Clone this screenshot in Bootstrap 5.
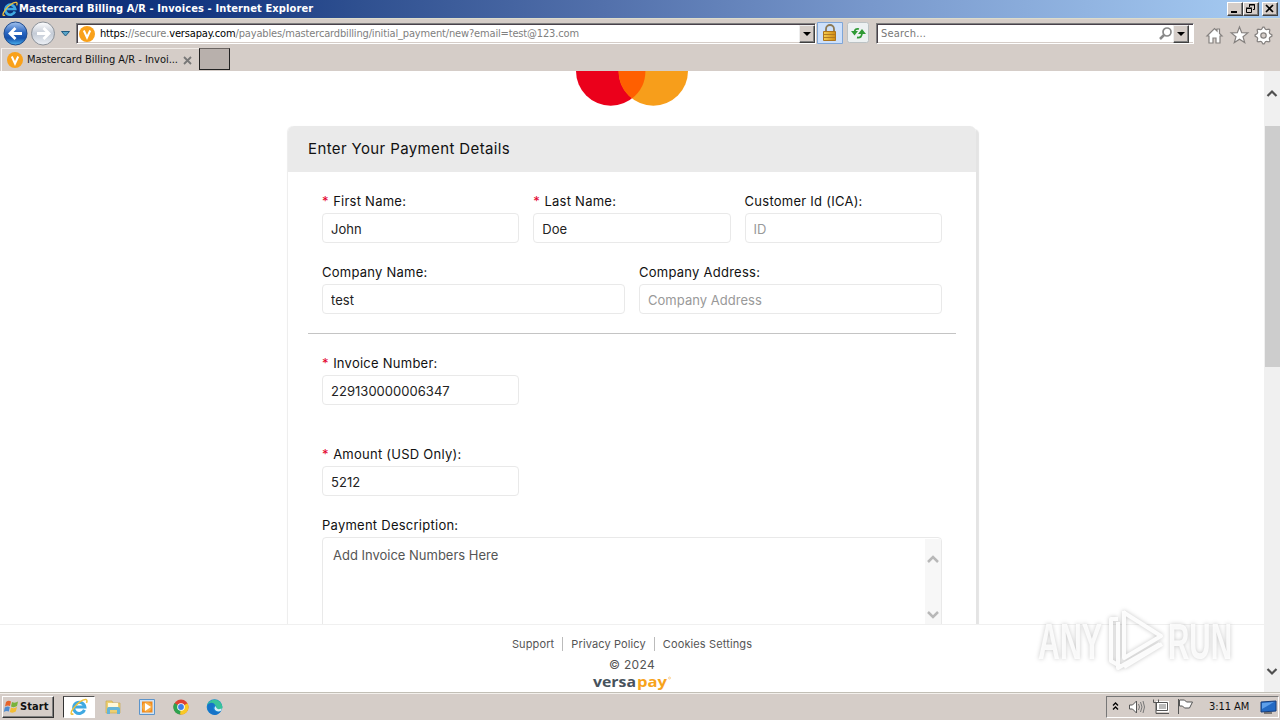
<!DOCTYPE html>
<html lang="en">
<head>
<meta charset="utf-8">
<title>Mastercard Billing A/R - Invoices</title>
<link href="https://cdn.jsdelivr.net/npm/bootstrap@5.3.0/dist/css/bootstrap.min.css" rel="stylesheet">
<style>
:root{--face:#d5cdc8;--ui:"DejaVu Sans Condensed","DejaVu Sans",sans-serif}
body{width:1280px;height:720px;overflow:hidden;font-family:Inter,sans-serif;font-size:13px;color:#111;background:#fff}
svg{display:block;flex:none;overflow:visible}
.ui{font-family:var(--ui);font-stretch:condensed;font-size:11px;line-height:14px;white-space:nowrap}
.titlebar{height:18px;background:linear-gradient(90deg,#0c2c73 0,#123580 15%,#2f5090 28%,#5270ab 47%,#7898cc 68%,#a3c8f0 97%);color:#fff;padding:0 2px}
.titlebar .cap{font-weight:700;letter-spacing:.12px;margin-left:1px}
.winbtn{width:16px;height:14px;background:var(--face);border:1px solid;border-color:#fff #404040 #404040 #fff;box-shadow:inset -1px -1px #808080}
.toolbar{height:30px;background:var(--face);border-top:1px solid #dcdccb}
.sunk{height:21px;background:#fff;border:1px solid;border-color:#808080 #fff #fff #808080;box-shadow:inset 1px 1px #49414a,inset 0 -1px #d5cdc8}
.drop{width:16px;height:18px;background:var(--face);border:1px solid;border-color:#eee #404040 #404040 #eee;box-shadow:inset -1px -1px #808080}
.tabs{height:23px;background:var(--face)}
.tab1{width:198px;height:23px;border-left:1px solid #f8f6f4;border-top:1px solid #f1ece8}
.tab2{width:31px;height:22px;background:#b8b0ac;border:1px solid #555;border-color:#6b6562 #222 #222 #222}
.viewport{height:621px}
.content{width:1264px}
.scroller{height:553px;overflow:hidden}
.pay{width:688px;height:600px;margin-top:20px;border:0;border-radius:6px;box-shadow:4px 2px 1px -1px #e4e4e4,-1px 0 1px #ededed}
.pay .card-header{height:46px;background:#eaeaea;border:0;border-radius:6px 6px 0 0;padding:0 20px;font-size:15px;letter-spacing:.38px;line-height:46px}
.pay .card-body{padding:19px 20px 20px}
.grp{padding:0 14px;gap:14px}
.grp label{display:block;line-height:20px;height:22px;font-size:13px;letter-spacing:.25px}
.grp label b{color:#e3002b;font-weight:400;letter-spacing:.7px}
.grp .form-control{height:30px;min-height:0;padding:2px 8px 1px;font-size:13px;line-height:20px;letter-spacing:.03px;border:1px solid #e9e9e9;border-radius:4px;color:#222}
.grp .form-control::placeholder{color:#999;opacity:1}
.third{width:197.3px}
.rule{height:1px;background:#c4c4c4}
.area{height:120px;border:1px solid #e9e9e9;border-radius:4px;padding:7px 0 0 10px;color:#555;line-height:20px;letter-spacing:-.01px}
.areabar{width:16px;margin-top:-6px;background:#f7f7f7;padding:15px 0 0 2px}
.foot{height:68px;border-top:1px solid #f0f0f0;color:#555;font-size:11px}
.links{height:14px;margin-top:12px;line-height:14px;letter-spacing:.12px}
.links span+span{border-left:1px solid #bbb}
.vbar{width:16px;background:#f0f0f0}
.thumb{height:241px;background:#cdcdcd;margin-left:1px}
.taskbar{height:28px;background:var(--face);border-top:1px solid #c2bfb6;box-shadow:inset 0 1px #f3f0ec;padding-left:2px}
.start{width:52px;height:22px;border:1px solid;border-color:#fff #333 #333 #fff;box-shadow:inset -1px -1px #808080}
.pressed{width:32px;height:22px;background:#fff;border:1px solid;border-color:#555 #fff #fff #333}
.tray{width:173px;height:22px;border:1px solid;border-color:#777 #fff #fff #777}
.mark-run{left:1030px;top:604px}
</style>
</head>
<body>
<svg width="0" height="0" class="position-absolute">
<defs>
<symbol id="ie" viewBox="0 0 16 16"><path d="M12.9 10.6A5 5 0 1 1 13.2 8H4" fill="none" stroke="#3fa9e2" stroke-width="2.7"/><path d="M3 14C.5 15.5.2 13 2.8 9.6 6 5 11.5.6 14.4 1.400c1 .4.8 1.800.2 3" fill="none" stroke="#efc13a" stroke-width="1.3"/></symbol>
<symbol id="vp" viewBox="0 0 16 16"><circle cx="8" cy="8" r="8" fill="#f9a11b"/><path d="M4.800 4.500 8 11.500l3.200-7" fill="none" stroke="#fff" stroke-width="2"/></symbol>
<linearGradient id="bl" x2="0" y2="1"><stop stop-color="#a5c4ef"/><stop offset=".45" stop-color="#2a66c1"/><stop offset=".7" stop-color="#1450ac"/><stop offset="1" stop-color="#4bb4ee"/></linearGradient>
<linearGradient id="gy" x2="0" y2="1"><stop stop-color="#fff"/><stop offset=".5" stop-color="#c4cbd6"/><stop offset="1" stop-color="#edf1f6"/></linearGradient>
<linearGradient id="gold" x2="1"><stop stop-color="#f6cf50"/><stop offset="1" stop-color="#d08a13"/></linearGradient>
</defs>
</svg>

<header>
<div class="titlebar d-flex align-items-center ui">
<svg width="16" height="16"><use href="#ie"/></svg><span class="cap flex-grow-1">Mastercard Billing A/R - Invoices - Internet Explorer</span>
<span class="winbtn"><svg width="14" height="12"><path d="M3 9h6" stroke="#000" stroke-width="2"/></svg></span>
<span class="winbtn"><svg width="14" height="12" fill="none" stroke="#000"><path d="M5.500 4V1.500h5v5H9M5 2h6M2.500 5.500h5v4h-5zM2 5h6"/></svg></span>
<span class="winbtn" style="margin-left:3px"><svg width="14" height="12"><path d="m3 2 7 7m0-7-7 7" stroke="#000" stroke-width="1.700"/></svg></span>
</div>
<div class="toolbar d-flex align-items-start">
<svg width="76" height="29" viewBox="0 19 76 29"><circle cx="15.500" cy="33.500" r="11.500" fill="url(#bl)" stroke="#204b8c"/><path d="M22 33.500H10m5.500-5.500L10 33.500l5.500 5.500" fill="none" stroke="#fff" stroke-width="2.800"/><circle cx="43" cy="33.500" r="11.500" fill="url(#gy)" stroke="#8c9198"/><path d="M37 33.500h12m-5.500-5.500 5.500 5.500-5.500 5.500" fill="none" stroke="#fff" stroke-width="2.800"/><path d="M61.500 31.500h8L65.500 36z" fill="#59a5c9" stroke="#205c82"/></svg>
<div class="sunk mt-1 d-flex align-items-center ui" style="width:740px"><svg style="margin:0 5px 0 2px" width="16" height="16"><use href="#vp"/></svg><span class="flex-grow-1" style="color:#808080;letter-spacing:-.155px"><span class="text-black">https:</span>//secure.<span class="text-black">versapay.com</span>/payables/mastercardbilling/initial_payment/new?email=test@123.com</span><span class="drop"><svg width="14" height="16"><path d="M3 6h8l-4 4z"/></svg></span></div>
<svg width="54" height="24" viewBox="816 19 54 24"><path d="M817.500 22.500h25v21h-25z" fill="#cde0fb" stroke="#7fa6d8"/><path d="M826 32v-3a4 4 0 0 1 8 0v3" fill="none" stroke="#8c7955" stroke-width="1.800"/><path d="M823.500 31.500h12v9h-12z" fill="url(#gold)" stroke="#ad741d"/><path d="M824 34.500h11m-11 3h11" stroke="#b27a22"/><rect x="847.500" y="22.500" width="21" height="20" rx="2" fill="#edf1f2" stroke="#bcc2c4"/><path d="M859 29q-4-1-4.500 3M857 37.500q5 1 5-5" fill="none" stroke="#2f9a35" stroke-width="1.800"/><path d="M851 31h7l-3.500 4.500zM858 34h8l-4-5z" fill="#2f9a35"/></svg>
<div class="sunk mt-1 d-flex align-items-center ui" style="width:318px;margin-left:6px"><span class="flex-grow-1" style="color:#777;margin-left:4px;letter-spacing:.2px">Search...</span><svg width="15" height="16"><circle cx="9" cy="6" r="4" fill="none" stroke="#888" stroke-width="1.700"/><path d="m6 9-4 4" stroke="#888" stroke-width="2.500"/></svg><span class="drop me-1"><svg width="14" height="16"><path d="M3 6h8l-4 4z"/></svg></span></div>
<svg class="ms-2" width="76" height="28" viewBox="1202 19 76 28" fill="#fff" stroke="#85817f" stroke-width="1.200"><path d="m1207 36 7.500-7.500 2.500 2.500v-2h2.500v4.500l2.500 2.500h-2v7h-4v-5h-3v5h-4v-7z"/><path d="m1239.500 27 2.200 5.700 6.100.2-4.800 3.800 1.700 5.900-5.200-3.400-5.200 3.400 1.700-5.900-4.800-3.800 6.100-.2z"/><path d="M1271.930 34.890L1271.930 36.110L1269.780 37.450L1269.320 38.540L1269.900 41.010L1269.010 41.900L1266.540 41.320L1265.450 41.780L1264.110 43.930H1262.890L1261.550 41.780L1260.460 41.320L1257.990 41.900L1257.100 41.010L1257.680 38.540L1257.220 37.450L1255.070 36.110V34.890L1257.220 33.550L1257.680 32.460L1257.100 29.990L1257.990 29.100L1260.460 29.680L1261.550 29.220L1262.890 27.070H1264.110L1265.450 29.220L1266.540 29.680L1269.010 29.100L1269.900 29.990L1269.320 32.460L1269.780 33.550z"/><circle cx="1263.500" cy="35.500" r="2.700" fill="#d5cdc8"/></svg>
</div>
<div class="tabs d-flex ui">
<div class="tab1 d-flex align-items-center" style="margin-left:1px;padding-left:5px"><svg width="16" height="16"><use href="#vp"/></svg><span class="ms-1" style="letter-spacing:-.03px;width:156px">Mastercard Billing A/R - Invoi...</span><svg width="9" height="9"><path d="m1 1 7 7m0-7-7 7" stroke="#777" stroke-width="1.800"/></svg></div>
<div class="tab2"></div>
</div>
</header>

<main class="viewport d-flex">
<div class="content">
<div class="scroller">
<svg class="mx-auto overflow-hidden" width="112" height="35" viewBox="0 0 112 35"><circle cx="34.700" cy="0" r="34.700" fill="#eb001b"/><circle cx="77.300" cy="0" r="34.700" fill="#f79e1b"/><path d="M42.600 0A34.700 34.700 0 0 0 56 27.400 34.700 34.700 0 0 0 69.400 0z" fill="#ff5f00"/></svg>
<section class="card pay mx-auto">
<div class="card-header">Enter Your Payment Details</div>
<form class="card-body">
<div class="grp d-flex">
<div class="third"><label><b>*</b> First Name:</label><input class="form-control" value="John"></div>
<div class="third"><label><b>*</b> Last Name:</label><input class="form-control" value="Doe"></div>
<div class="third"><label>Customer Id (ICA):</label><input class="form-control" placeholder="ID"></div>
</div>
<div class="grp d-flex" style="margin-top:19px">
<div class="flex-fill"><label>Company Name:</label><input class="form-control" value="test"></div>
<div class="flex-fill"><label>Company Address:</label><input class="form-control" placeholder="Company Address"></div>
</div>
<div class="rule" style="margin-top:19px"></div>
<div class="grp" style="margin-top:19px"><div class="third"><label><b>*</b> Invoice Number:</label><input class="form-control" value="229130000006347"></div></div>
<div class="grp" style="margin-top:39px"><div class="third"><label><b>*</b> Amount (USD Only):</label><input class="form-control" value="5212"></div></div>
<div class="grp" style="margin-top:19px"><label>Payment Description:</label>
<div class="area d-flex justify-content-between"><span>Add Invoice Numbers Here</span><div class="areabar"><svg width="12" height="70" fill="none" stroke="#b8b8b8" stroke-width="2.500"><path d="m1 8 5-5 5 5M1 58l5 5 5-5"/></svg></div></div></div>
</form>
</section>
</div>
<footer class="foot bg-white">
<div class="links d-flex justify-content-center"><span class="pe-2">Support</span><span class="px-2">Privacy Policy</span><span class="ps-2">Cookies Settings</span></div>
<div class="text-center" style="font-size:12px;line-height:14px;margin-top:7px;letter-spacing:.3px">© 2024</div>
<svg class="mx-auto" width="80" height="20" viewBox="0 0 80 20" font-family="Open Sans,sans-serif" font-weight="700" font-size="15"><text x="1" y="15" textLength="43" lengthAdjust="spacingAndGlyphs" fill="#47525c">versa</text><text x="45" y="15" textLength="30" lengthAdjust="spacingAndGlyphs" fill="#f7a31c">pay</text><circle cx="77.500" cy="6" r="1" fill="none" stroke="#f7b95a" stroke-width=".6"/></svg>
</footer>
</div>
<div class="vbar"><svg width="16" height="55"><path d="m3.500 25 4.500-4.500 4.500 4.500" fill="none" stroke="#505050" stroke-width="2.200"/></svg><div class="thumb"></div><svg width="16" height="325"><path d="m3.500 302 4.500 4.500 4.500-4.500" fill="none" stroke="#505050" stroke-width="2.200"/></svg></div>
</main>

<div class="taskbar d-flex align-items-center ui">
<div class="start d-flex align-items-center fw-bold"><svg width="17" height="16" viewBox="0 0 17 16"><path d="M3 3q2.500-2 5-.5L7 7Q4.500 6 2 7.500z" fill="#e66429"/><path d="M9 3q3 1.500 6-.5L14 7q-3 2-6 .5z" fill="#78b33c"/><path d="M1.800 8.500q2.500-1.500 5-.5l-1 4.500q-2.500-1-5 .5z" fill="#4f8cd0"/><path d="M8 8.500q3 1.500 6-.5l-1.200 4.500q-3 2-6 .5z" fill="#f3bd35"/></svg><span style="letter-spacing:.1px">Start</span></div>
<div class="pressed d-flex justify-content-center align-items-center" style="margin-left:9px"><svg width="18" height="18"><use href="#ie"/></svg></div>
<svg width="132" height="24" viewBox="95 695 132 24"><path d="M106 701h6l1 2h7v10h-14z" fill="#edcf70" stroke="#c9ab50" stroke-width=".7"/><path d="M108 703h10v4h-10z" fill="#fff8d8"/><path d="M107 714v-5q0-2 2-2h9q2 0 2 2v5h-3v-4h-7v4z" fill="#64b4d7"/><path d="M139.500 699.500h15v15h-15z" fill="#cfe3f5" stroke="#5c94ca"/><path d="M142 701.500h10.500v11H142z" fill="#f28a1c"/><circle cx="147" cy="707" r="4.800" fill="#f8ad45"/><path d="m145 703 6 4-6 4z" fill="#fff"/><circle cx="181" cy="707" r="7.500" fill="#df4132"/><path d="M181 707v7.500A7.500 7.500 0 0 1 174.500 703z" fill="#2ea350"/><path d="M181 707l6.500-3.700A7.500 7.500 0 0 1 180 714.500z" fill="#f9c925"/><circle cx="181" cy="707" r="3.800" fill="#fff"/><circle cx="181" cy="707" r="2.900" fill="#3f7fe8"/><circle cx="214.500" cy="707" r="7.800" fill="#1788d2"/><path d="M207 705a8 8 0 0 1 15.500 2q0 3-4 3-3 0-2-3-2-5-9.500-2z" fill="#38c29a"/><path d="M208 704q5-3 7 1-4 3 0 6 3 2 6 0-5 7-11 2-4-4-2-9z" fill="#1673c8"/><path d="M215.500 706q-2.500 3 1 5 2 1 5-.5v-2q-4 1.500-5-.5z" fill="#d6edf8"/></svg>
<div class="tray ms-auto d-flex align-items-center" style="margin-right:1px"><svg width="96" height="20" viewBox="1107 697 96 20" fill="none" stroke="#555"><path d="m1113 705.500 2.500-2.500 2.500 2.500m-5 4 2.500-2.500 2.500 2.500" stroke="#000" stroke-width="1.300"/><path d="M1129.500 705h3l4-4v12l-4-4h-3z" fill="#fff"/><path d="M1138.500 704q2 3 0 6m2-8q3 5 0 10m2.500-11q3 6 0 12" stroke="#777"/><path d="M1157.500 702.500h10v8h-10z" fill="#bbb" stroke="#fff" stroke-width="3"/><path d="M1156.500 702.500h11v8h-11zM1158 713.500h11M1153.500 699.500v3h5v-3m-2.500 3v11h3"/><path d="M1178.500 699v15m1-14h5l2 2h6l-3 6h-5l-2-2h-3z" fill="#fff"/></svg><span style="letter-spacing:-.05px;margin-left:6px">3:11 AM</span><svg class="ms-auto" width="17" height="18" viewBox="1 0 17 18"><path d="m1 4 15-1v10l-15 1z" fill="#236ac4" stroke="#173d7a"/><path d="m2 5 12-1-12 7z" fill="#5d9fea"/><path d="M4 15h8" stroke="#222"/></svg></div>
</div>

<svg class="mark-run position-absolute" width="210" height="76" viewBox="1030 604 210 76" style="filter:drop-shadow(0 0 2px rgba(0,0,0,.25))" fill="#fff" fill-opacity=".85">
<g font-family="Liberation Sans Narrow,Liberation Sans,sans-serif" font-weight="700" font-size="50"><text x="1038" y="659" textLength="64" lengthAdjust="spacingAndGlyphs">ANY</text><text x="1168" y="659" textLength="64" lengthAdjust="spacingAndGlyphs">RUN</text></g>
<g fill="none" stroke="#fff" stroke-opacity=".9" stroke-width="4" stroke-linejoin="round"><path d="M1124 611v47l37-22-38-24M1118 619h-7v42l9 5M1124 667l38-23M1118 622v46l42-24"/></g>
</svg>
<script src="https://cdn.jsdelivr.net/npm/bootstrap@5.3.0/dist/js/bootstrap.bundle.min.js"></script>
</body>
</html>
